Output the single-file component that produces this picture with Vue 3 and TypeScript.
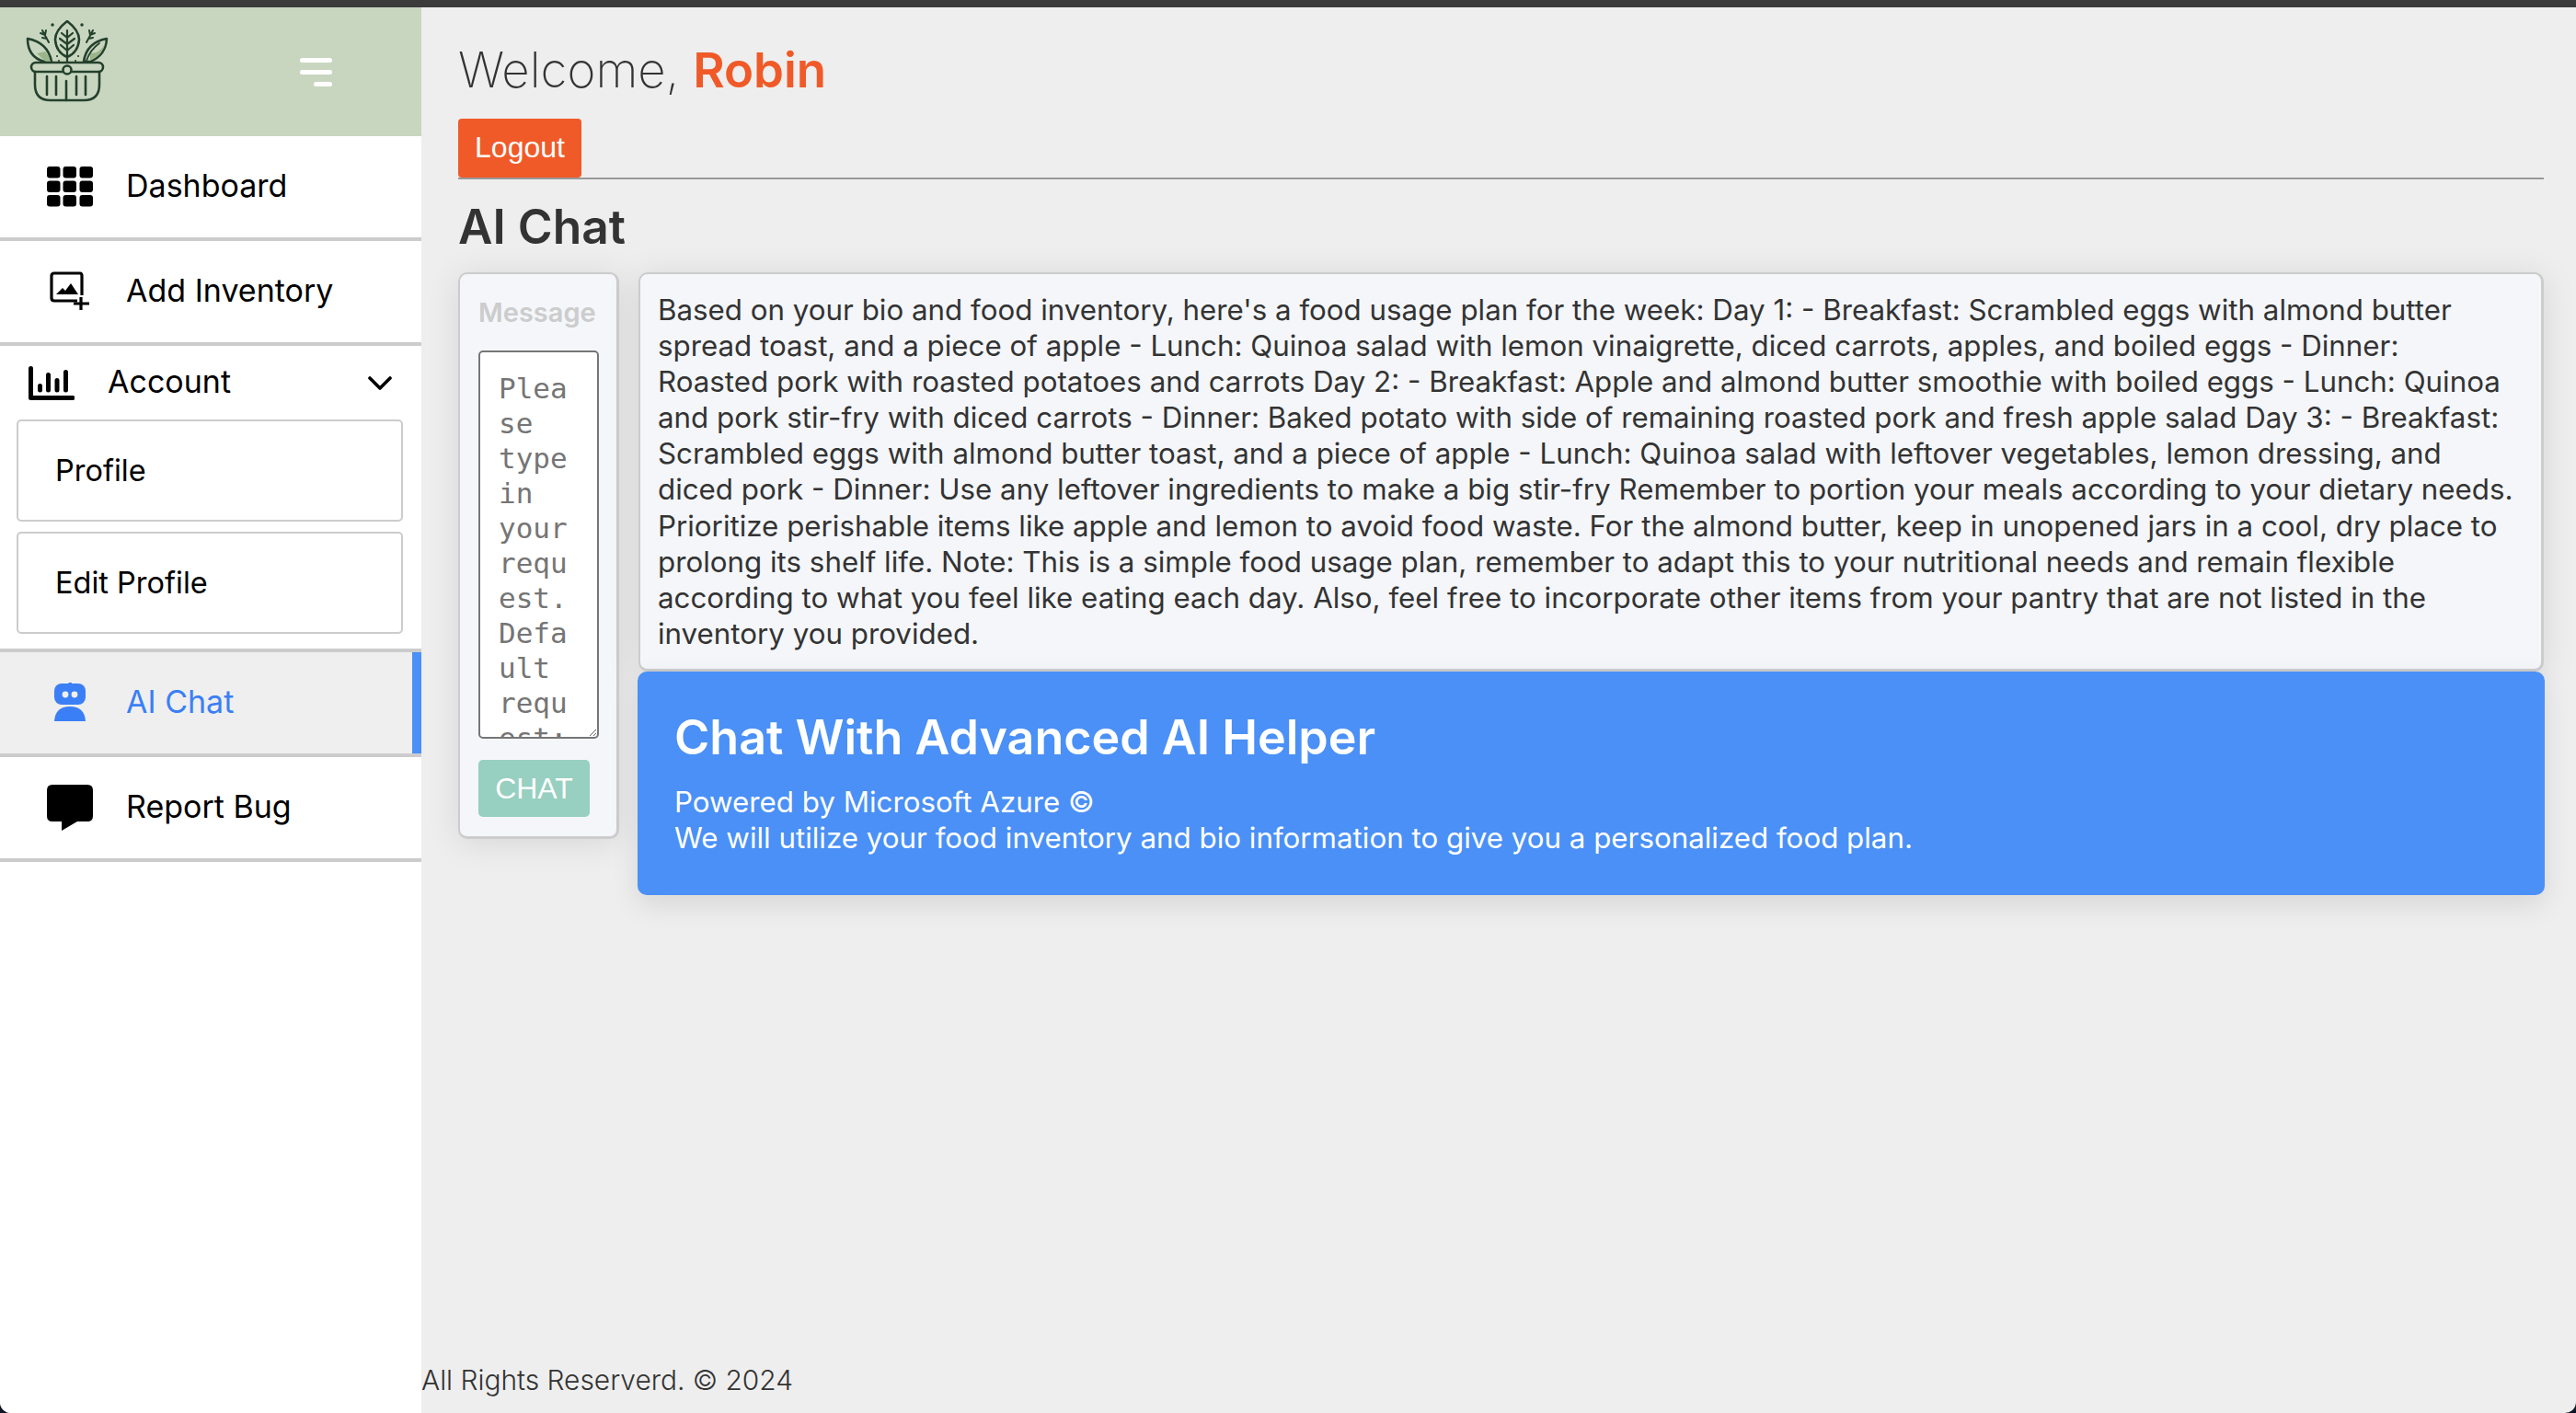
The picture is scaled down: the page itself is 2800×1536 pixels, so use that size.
<script setup lang="ts">
const planLines = [
  "Based on your bio and food inventory, here's a food usage plan for the week: Day 1: - Breakfast: Scrambled eggs with almond butter",
  'spread toast, and a piece of apple - Lunch: Quinoa salad with lemon vinaigrette, diced carrots, apples, and boiled eggs - Dinner:',
  'Roasted pork with roasted potatoes and carrots Day 2: - Breakfast: Apple and almond butter smoothie with boiled eggs - Lunch: Quinoa',
  'and pork stir-fry with diced carrots - Dinner: Baked potato with side of remaining roasted pork and fresh apple salad Day 3: - Breakfast:',
  'Scrambled eggs with almond butter toast, and a piece of apple - Lunch: Quinoa salad with leftover vegetables, lemon dressing, and',
  'diced pork - Dinner: Use any leftover ingredients to make a big stir-fry Remember to portion your meals according to your dietary needs.',
  'Prioritize perishable items like apple and lemon to avoid food waste. For the almond butter, keep in unopened jars in a cool, dry place to',
  'prolong its shelf life. Note: This is a simple food usage plan, remember to adapt this to your nutritional needs and remain flexible',
  'according to what you feel like eating each day. Also, feel free to incorporate other items from your pantry that are not listed in the',
  'inventory you provided.',
]
</script>

<template>
  <div class="page">
    <div class="topbar" />
    <div class="shell">
      <aside class="sidebar">
        <div class="brand">
          <svg class="logo" viewBox="28 22 90 90" fill="none" stroke="#24412d" stroke-width="2.6" stroke-linecap="round" stroke-linejoin="round">
            <!-- leaves -->
            <path d="M30 42 Q52 46 56 67 L48 67 Q30 62 30 42Z" />
            <path d="M40 58 Q46 64 50 67 L55 67 Q53 60 49 56Z" fill="#9bb48a" stroke="none" />
            <path d="M116 42 Q94 46 91 67 L98 67 Q115 60 116 42Z" />
            <path d="M98 66 Q112 60 115 45 Q110 58 98 58Z" fill="#9bb48a" stroke="none" />
            <path d="M94 66 Q98 54 108 47" stroke-width="1.8" />
            <path d="M73 23 Q60 33 60 43 Q61 57 73 62 Q85 57 86 43 Q86 33 73 23Z" />
            <path d="M73 33 V67 M73 41 L67 36 M73 41 L79 36 M73 48 L65 42 M73 48 L81 42 M73 55 L66 49 M73 55 L80 49" stroke-width="2.2" />
            <!-- twigs and dots -->
            <path d="M46 33 L53 46 M49 38 L44 36 M51 42 L46 41 M49 38 L50 33" stroke-width="2" />
            <path d="M101 33 L94 46 M98 38 L103 36 M96 42 L101 41 M98 38 L97 33" stroke-width="2" />
            <path d="M57 27h.1 M89 27h.1" stroke-width="3.4" />
            <path d="M62 61h.1 M85 61h.1 M64 66h.1 M82 66h.1" stroke-width="2" />
            <!-- basket -->
            <rect x="34" y="68" width="78" height="10" rx="5" fill="#c8d6bf" />
            <path d="M38 78 V92 Q38 109 55 109 H91 Q108 109 108 92 V78" />
            <circle cx="73" cy="76" r="4.5" fill="#c8d6bf" />
            <path d="M51 83 V103 M61 83 V103 M72 88 V109 M83 83 V103 M93 83 V103" />
          </svg>
          <button class="menu-toggle" type="button" aria-label="Toggle menu">
            <span /><span /><span class="short" />
          </button>
        </div>

        <a class="nav-item">
          <svg class="icon" viewBox="0 0 50 44" fill="#000">
            <rect x="0" y="0" width="14.5" height="12.5" rx="3" /><rect x="17.5" y="0" width="14.5" height="12.5" rx="3" /><rect x="35.5" y="0" width="14.5" height="12.5" rx="3" />
            <rect x="0" y="15.5" width="14.5" height="12.5" rx="3" /><rect x="17.5" y="15.5" width="14.5" height="12.5" rx="3" /><rect x="35.5" y="15.5" width="14.5" height="12.5" rx="3" />
            <rect x="0" y="31" width="14.5" height="12.5" rx="3" /><rect x="17.5" y="31" width="14.5" height="12.5" rx="3" /><rect x="35.5" y="31" width="14.5" height="12.5" rx="3" />
          </svg>
          <span>Dashboard</span>
        </a>
        <a class="nav-item">
          <svg class="icon" viewBox="0 0 50 44" fill="none" stroke="#000" stroke-width="3.2">
            <path d="M33 32 H8 Q5 32 5 29 V5 Q5 2 8 2 H36 Q38 2 38 5 V26" stroke-linejoin="round" />
            <path d="M10 25 L17 18 L20 21 L26 13 L34 25Z" fill="#000" stroke="none" />
            <path d="M37 28 V42 M29 35 H46" />
          </svg>
          <span>Add Inventory</span>
        </a>

        <div class="account">
          <div class="account-head">
            <svg class="account-icon" viewBox="0 0 50 37" fill="none" stroke="#000" stroke-width="5" stroke-linecap="round" stroke-linejoin="round">
              <path d="M2.5 2.5 V34.5 H48" />
              <path d="M12.5 21.5 V26 M21.5 9.5 V26 M31 15.5 V26 M40.5 6.5 V26" />
            </svg>
            <span>Account</span>
            <svg class="chevron" viewBox="0 0 26 16" fill="none" stroke="#000" stroke-width="3.6" stroke-linecap="round" stroke-linejoin="round"><path d="M2 2 L13 13 L24 2" /></svg>
          </div>
          <a class="sub-item">Profile</a>
          <a class="sub-item">Edit Profile</a>
        </div>

        <a class="nav-item active">
          <svg class="icon" viewBox="0 0 50 44" fill="#3b7ff6">
            <rect x="8" y="1" width="34" height="23" rx="8" />
            <rect x="23.5" y="-1" width="3.5" height="3" />
            <circle cx="20" cy="13" r="3.4" fill="#efefef" />
            <circle cx="30" cy="13" r="3.4" fill="#efefef" />
            <path d="M8 42 Q9 26 25 26 Q41 26 42 42Z" />
          </svg>
          <span>AI Chat</span>
        </a>
        <a class="nav-item">
          <svg class="icon tall" viewBox="0 0 50 50" fill="#000">
            <path d="M6 0 H44 Q50 0 50 6 V34 Q50 40 44 40 H33 L16 50 V40 H6 Q0 40 0 34 V6 Q0 0 6 0Z" />
          </svg>
          <span>Report Bug</span>
        </a>
      </aside>

      <main class="main">
        <div class="content">
          <h1 class="welcome">Welcome, <b>Robin</b></h1>
          <button class="logout" type="button">Logout</button>
          <hr class="rule" />
          <h2 class="title">AI Chat</h2>

          <div class="chat-grid">
            <form class="card message-card" @submit.prevent>
              <label class="message-label" for="message">Message</label>
              <textarea id="message" class="message-input" placeholder="Please type in your request. Default request: food plan for the week" />
              <button class="chat-btn" type="button" disabled>CHAT</button>
            </form>

            <div class="chat-right">
              <div class="card answer">
                <span v-for="line in planLines" :key="line" class="answer-line">{{ line }}</span>
              </div>
              <div class="helper">
                <h3>Chat With Advanced AI Helper</h3>
                <p>Powered by Microsoft Azure ©</p>
                <p>We will utilize your food inventory and bio information to give you a personalized food plan.</p>
              </div>
            </div>
          </div>
        </div>
        <footer class="footer">All Rights Reserverd. © 2024</footer>
      </main>
    </div>
  </div>
</template>

<style>
html,
body {
  margin: 0;
  height: 100%;
  background: #0d1526;
}
</style>

<style scoped>
.page {
  display: flex;
  flex-direction: column;
  height: 1536px;
  width: 2800px;
  overflow: hidden;
  border-radius: 0 0 12px 12px;
  background: #eee;
  font-family: Inter, "Liberation Sans", sans-serif;
  color: #333;
}

.topbar {
  height: 8px;
  flex: none;
  background: #3b3b3b;
}

.shell {
  flex: 1;
  display: flex;
  min-height: 0;
}

.sidebar {
  width: 458px;
  flex: none;
  display: flex;
  flex-direction: column;
  background: #fff;
}

.brand {
  height: 140px;
  flex: none;
  display: flex;
  align-items: flex-start;
  background: #c8d6bf;
}

.logo {
  width: 90px;
  height: 90px;
  margin: 14px 0 0 28px;
}

.menu-toggle {
  display: flex;
  flex-direction: column;
  align-items: flex-end;
  gap: 8px;
  margin: 55px 0 0 208px;
  padding: 0;
  border: 0;
  background: none;
}

.menu-toggle span {
  display: block;
  width: 35px;
  height: 5px;
  border-radius: 3px;
  background: #fff;
}

.menu-toggle .short {
  width: 20px;
}

.nav-item {
  height: 110px;
  flex: none;
  display: flex;
  align-items: center;
  gap: 36px;
  padding-left: 51px;
  border-bottom: 4px solid #ccc;
  font-size: 34px;
  color: #000;
}

.nav-item span {
  padding-bottom: 4px;
}

.icon {
  width: 50px;
  height: 44px;
  flex: none;
}

.icon.tall {
  height: 50px;
}

.account {
  padding-bottom: 16px;
  border-bottom: 4px solid #ccc;
}

.account-head {
  height: 80px;
  display: flex;
  align-items: center;
  padding-left: 31px;
  font-size: 34px;
  color: #000;
}

.account-head span {
  padding-bottom: 3px;
}

.account-icon {
  width: 50px;
  height: 37px;
  margin-right: 36px;
}

.chevron {
  width: 26px;
  height: 16px;
  margin-left: auto;
  margin-right: 32px;
  margin-top: 2px;
}

.sub-item {
  box-sizing: border-box;
  display: flex;
  align-items: center;
  height: 111px;
  margin: 0 20px 11px 18px;
  padding-left: 40px;
  border: 2px solid #ccc;
  border-radius: 5px;
  font-size: 32.5px;
  color: #000;
}

.sub-item:last-child {
  margin-bottom: 0;
}

.nav-item.active {
  background: #efefef;
  color: #3b7ff6;
  box-shadow: inset -10px 0 0 #4a90f6;
}

.main {
  flex: 1;
  min-width: 0;
  display: flex;
  flex-direction: column;
}

.content {
  flex: 1;
  padding: 0 35px 0 40px;
}

.welcome {
  margin: 0;
  padding-top: 34px;
  font-size: 52.8px;
  line-height: 68px;
  font-weight: 200;
  color: #333;
}

.welcome b {
  font-weight: 600;
  color: #f05a28;
}

.logout {
  display: block;
  width: 134px;
  height: 64px;
  margin-top: 19px;
  padding: 0 0 2px;
  border: 0;
  border-radius: 4px;
  background: #f05a28;
  color: #fff;
  font: 32px "Liberation Sans", Arial, sans-serif;
}

.rule {
  margin: 0;
  height: 2px;
  border: 0;
  background: #999;
}

.title {
  margin: 0;
  padding: 19px 0 18px;
  font-size: 51.5px;
  line-height: 64px;
  font-weight: 600;
  color: #333;
}

.chat-grid {
  display: flex;
  align-items: flex-start;
  gap: 20px;
}

.card {
  box-sizing: border-box;
  border: 3px solid #ccc;
  border-top-width: 2px;
  border-left-width: 2px;
  border-radius: 10px;
  background: #f4f6fa;
  box-shadow: 0 4px 36px rgba(0, 0, 0, 0.1);
}

.message-card {
  width: 175px;
  height: 616px;
  flex: none;
  display: flex;
  flex-direction: column;
  align-items: flex-start;
  padding: 26px 20px;
}

.message-label {
  font-size: 29px;
  line-height: 32px;
  font-weight: 600;
  color: #ccc;
  margin-bottom: 25px;
}

.message-input {
  box-sizing: border-box;
  width: 131px;
  height: 422px;
  flex: none;
  margin: 0;
  padding: 20px;
  border: 2px solid #767676;
  border-radius: 5px;
  background: #fff;
  font-family: "DejaVu Sans Mono", monospace;
  font-size: 31px;
  line-height: 38px;
  overflow: hidden;
}

.message-input::placeholder {
  color: #757575;
}

.chat-btn {
  flex: none;
  width: 121px;
  height: 62px;
  margin-top: 23px;
  padding: 0;
  border: 0;
  border-radius: 5px;
  background: #97cfc0;
  color: #fff;
  font: 32px "Liberation Sans", Arial, sans-serif;
}

.chat-right {
  flex: 1;
  min-width: 0;
  display: flex;
  flex-direction: column;
}

.answer {
  height: 434px;
  margin-left: 1px;
  padding: 20px 19px 0;
  font-size: 31.3px;
  line-height: 39.1px;
  color: #333;
}

.answer-line {
  display: block;
  white-space: nowrap;
}

.helper {
  height: 243px;
  box-sizing: border-box;
  margin-right: -1px;
  padding: 40px 40px 0;
  border-radius: 10px;
  background: #4a90f6;
  color: #fff;
  font-size: 31.3px;
  line-height: 39px;
  box-shadow: 0 10px 30px rgba(0, 0, 0, 0.1);
}

.helper h3 {
  margin: 0 0 19px;
  font-size: 52px;
  line-height: 64px;
  font-weight: 600;
}

.helper p {
  margin: 0;
}

.footer {
  height: 56px;
  flex: none;
  font-size: 29.9px;
  line-height: 40px;
  font-weight: 300;
  color: #333;
}
</style>
